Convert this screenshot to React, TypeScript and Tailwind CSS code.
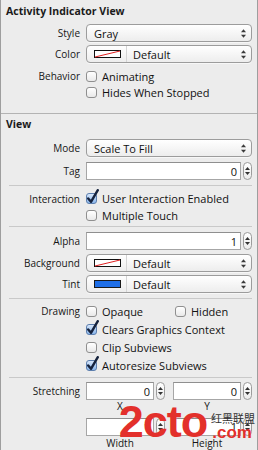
import React from "react";

const FONT = { fontFamily: '"Open Sans", "Noto Sans", sans-serif' };

function Arrows() {
  return (
    <svg width="7" height="11" viewBox="0 0 7 11" className="shrink-0">
      <path d="M1 4.2 L3.5 1.2 L6 4.2 Z" fill="#3a3a3a" />
      <path d="M1 6.8 L3.5 9.8 L6 6.8 Z" fill="#3a3a3a" />
    </svg>
  );
}

function Popup({ children }: { children: React.ReactNode }) {
  return (
    <div className="flex h-[18px] w-full items-center rounded-[4px] border border-[#9c9c9c] bg-gradient-to-b from-white to-[#ededed] pl-[7px] pr-[4px] text-[11px] text-[#111] shadow-[0_1px_0_rgba(255,255,255,0.6)]">
      <div className="flex flex-1 items-center leading-none">{children}</div>
      <Arrows />
    </div>
  );
}

function ColorPopup({ swatch }: { swatch: "none" | "blue" }) {
  return (
    <Popup>
      {swatch === "none" ? (
        <svg width="27" height="8" viewBox="0 0 27 8" className="shrink-0">
          <rect x="0.5" y="0.5" width="26" height="7" fill="#fff" stroke="#111" />
          <line x1="1" y1="7" x2="26" y2="1" stroke="#e02020" strokeWidth="1" />
        </svg>
      ) : (
        <div className="h-[8px] w-[27px] shrink-0 border border-[#1a1a1a] bg-[#1f6fe8]" />
      )}
      <div className="ml-[5px] h-[16px] w-px bg-[#d4d4d4]" />
      <span className="ml-[6px]">Default</span>
    </Popup>
  );
}

function Stepper() {
  return (
    <div className="flex h-[18px] w-[9px] shrink-0 flex-col items-center justify-center gap-[2px] rounded-[5px] border border-[#9c9c9c] bg-gradient-to-b from-white to-[#ececec]">
      <svg width="5" height="3" viewBox="0 0 5 3">
        <path d="M0 3 L2.5 0 L5 3 Z" fill="#333" />
      </svg>
      <svg width="5" height="3" viewBox="0 0 5 3">
        <path d="M0 0 L2.5 3 L5 0 Z" fill="#333" />
      </svg>
    </div>
  );
}

function NumField({ value }: { value: string }) {
  return (
    <div className="flex w-full items-center gap-[2px]">
      <div className="flex h-[18px] flex-1 items-center justify-end border border-[#a6a6a6] border-t-[#8f8f8f] bg-white pr-[3px] text-[11px] leading-none text-[#111]">
        {value}
      </div>
      <Stepper />
    </div>
  );
}

function Checkbox({ checked }: { checked?: boolean }) {
  return (
    <div className="relative h-[11px] w-[11px] shrink-0">
      <div
        className={
          checked
            ? "h-[11px] w-[11px] rounded-[3px] border border-[#5d7fae] bg-gradient-to-b from-[#d6e6fa] to-[#8ab6ec]"
            : "h-[11px] w-[11px] rounded-[3px] border border-[#8f8f8f] bg-gradient-to-b from-white to-[#e9e9e9]"
        }
      />
      {checked && (
        <svg width="13" height="15" viewBox="0 0 13 15" className="absolute left-[0px] top-[-4px]">
          <path
            d="M2.2 9.4 L5 12.8 L11.8 1.2"
            fill="none"
            stroke="#15223d"
            strokeWidth="2.4"
            strokeLinecap="round"
            strokeLinejoin="round"
          />
        </svg>
      )}
    </div>
  );
}

function Check({ checked, label }: { checked?: boolean; label: string }) {
  return (
    <div className="flex items-center">
      <Checkbox checked={checked} />
      <span className="ml-[5px] whitespace-nowrap text-[11px] leading-none text-[#111]">{label}</span>
    </div>
  );
}

function Row({
  label,
  h = "h-[18px]",
  className = "",
  children,
}: {
  label?: string;
  h?: string;
  className?: string;
  children?: React.ReactNode;
}) {
  return (
    <div className={`flex items-center ${h} ${className}`}>
      <div className="w-[79px] shrink-0 whitespace-nowrap text-right text-[10px] leading-none text-[#161616]">
        {label}
      </div>
      <div className="ml-[6px] mr-[5px] flex flex-1 items-center">{children}</div>
    </div>
  );
}

function Sep({ className = "" }: { className?: string }) {
  return <div className={`ml-[8px] mr-[5px] h-px bg-[#c9c9c9] ${className}`} />;
}

export default function App() {
  return (
    <div
      className="relative flex h-[450px] w-[258px] flex-col overflow-hidden border-x border-[#9e9e9e] bg-[#ececec]"
      style={FONT}
    >
      {/* Section 1 */}
      <div className="flex h-[22px] items-center pl-[5px] text-[10.5px] font-bold leading-none text-[#1a1a1a]">
        Activity Indicator View
      </div>
      <Row label="Style" className="mt-[2px]">
        <Popup>Gray</Popup>
      </Row>
      <Row label="Color" className="mt-[3px]">
        <ColorPopup swatch="none" />
      </Row>
      <Row label="Behavior" h="h-[16px]" className="mt-[5px]">
        <Check label="Animating" />
      </Row>
      <Row h="h-[16px]">
        <Check label="Hides When Stopped" />
      </Row>

      <div className="mt-[13px] h-px bg-[#b3b3b3]" />

      {/* Section 2 */}
      <div className="flex h-[20px] items-center pl-[5px] text-[10.5px] font-bold leading-none text-[#1a1a1a]">
        View
      </div>
      <Row label="Mode" className="mt-[5px]">
        <Popup>Scale To Fill</Popup>
      </Row>
      <Row label="Tag" className="mt-[5px]">
        <NumField value="0" />
      </Row>
      <Sep className="mt-[5px]" />
      <Row label="Interaction" h="h-[17px]" className="mt-[4px]">
        <Check checked label="User Interaction Enabled" />
      </Row>
      <Row h="h-[17px]">
        <Check label="Multiple Touch" />
      </Row>
      <Sep className="mt-[2px]" />
      <Row label="Alpha" className="mt-[5px]">
        <NumField value="1" />
      </Row>
      <Row label="Background" className="mt-[4px]">
        <ColorPopup swatch="none" />
      </Row>
      <Row label="Tint" className="mt-[3px]">
        <ColorPopup swatch="blue" />
      </Row>
      <Sep className="mt-[5px]" />
      <Row label="Drawing" className="mt-[3px]">
        <div className="w-[89px]">
          <Check label="Opaque" />
        </div>
        <Check label="Hidden" />
      </Row>
      <Row>
        <Check checked label="Clears Graphics Context" />
      </Row>
      <Row>
        <Check label="Clip Subviews" />
      </Row>
      <Row>
        <Check checked label="Autoresize Subviews" />
      </Row>
      <Sep className="mt-[3px]" />
      <Row label="Stretching" className="mt-[4px]">
        <div className="flex flex-1 gap-[8px]">
          <div className="flex-1">
            <NumField value="0" />
          </div>
          <div className="flex-1">
            <NumField value="0" />
          </div>
        </div>
      </Row>
      <Row h="h-[12px]">
        <div className="flex flex-1 gap-[8px] text-[10px] leading-none text-[#161616]">
          <div className="flex-1 pr-[11px] text-center">X</div>
          <div className="flex-1 pr-[11px] text-center">Y</div>
        </div>
      </Row>
      <Row h="h-[19px]" className="mt-[5px]">
        <div className="flex flex-1 gap-[8px]">
          <div className="flex-1">
            <NumField value="1" />
          </div>
          <div className="flex-1">
            <NumField value="1" />
          </div>
        </div>
      </Row>
      <Row h="h-[13px]">
        <div className="flex flex-1 gap-[8px] text-[10px] leading-none text-[#161616]">
          <div className="flex-1 pr-[11px] text-center">Width</div>
          <div className="flex-1 pr-[11px] text-center">Height</div>
        </div>
      </Row>

      {/* Watermark overlay */}
      <div
        className="pointer-events-none absolute right-[5px] top-[399px] flex items-end whitespace-nowrap font-bold leading-none text-[#e3302b]"
        style={{ fontFamily: '"Liberation Sans", Arial, sans-serif' }}
      >
        <span className="text-[45px] tracking-[-1px]">2cto</span>
        <span className="mb-[3px] ml-[5px] text-[17px]">.com</span>
      </div>
      <div
        className="pointer-events-none absolute left-[210px] top-[413px] text-[11px] leading-none text-[#333]"
        style={{ fontFamily: '"Noto Sans CJK SC", sans-serif' }}
      >
        红黑联盟
      </div>
    </div>
  );
}
